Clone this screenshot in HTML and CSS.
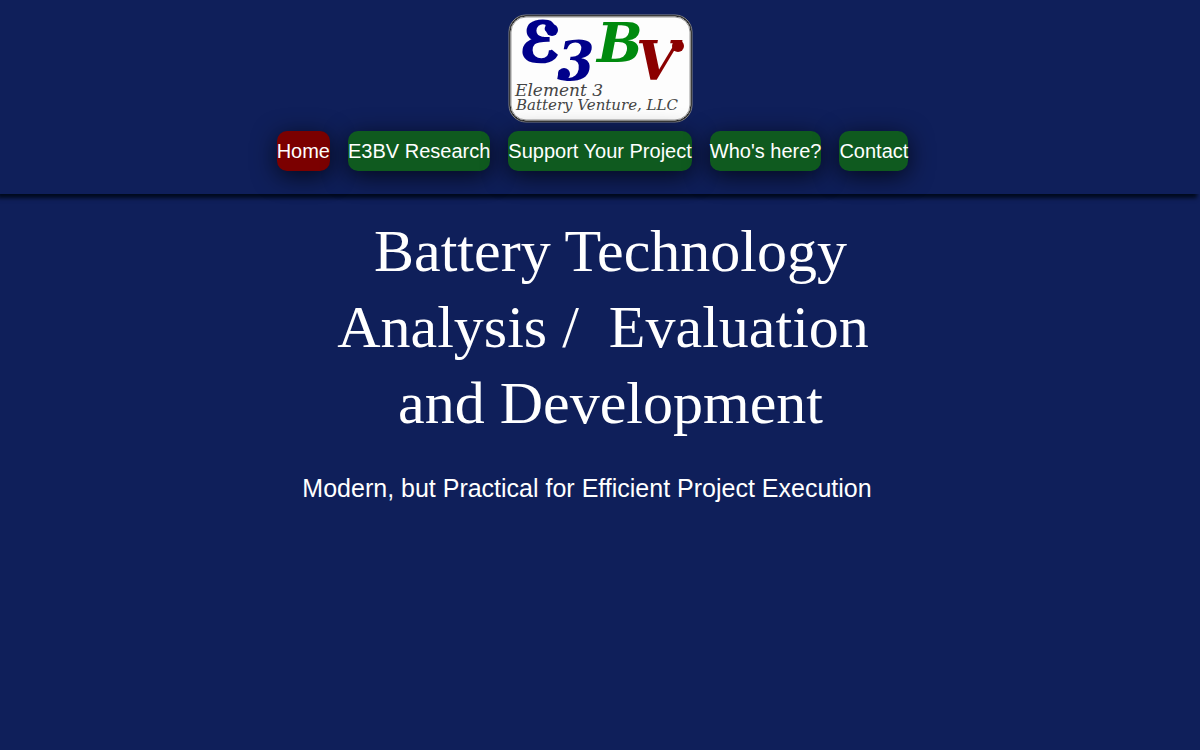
FILE: index.html
```html
<!DOCTYPE html>
<html lang="en">
<head>
    <meta charset="UTF-8">
    <meta name="viewport" content="width=device-width, initial-scale=1.0">
    <title>Element 3 Battery Venture, LLC</title>
    <link rel="stylesheet" href="styles.css">
</head>
<body>
    <header class="site-header">
        <svg class="logo" viewBox="0 0 186 110" role="img" aria-label="Element 3 Battery Venture, LLC">
            <rect class="frame-outer" x="2" y="2" width="183" height="107" rx="17"/>
            <rect class="frame-middle" x="3" y="3" width="181" height="105" rx="16"/>
            <rect class="frame-inner" x="4" y="4" width="179" height="103" rx="15"/>
            <!-- Monogram -->
            <g class="monogram">
                <text class="blue script" x="13" y="48">ℰ</text>
                <circle class="blue" cx="45" cy="17" r="6"/>
                <text class="blue" x="50" y="67">3</text>
                <circle class="blue" cx="57" cy="61" r="6"/>
                <text class="green" x="90" y="49">B</text>
                <text class="red" x="129" y="67">V</text>
                <circle class="red" cx="171" cy="33" r="6"/>
            </g>
            <g class="company">
                <text x="8" y="83">Element 3</text>
                <text class="small" x="9" y="97">Battery Venture, LLC</text>
            </g>
        </svg>
        <nav class="main-nav">
            <a class="nav-link active" href="#home">Home</a>
            <a class="nav-link" href="#research">E3BV Research</a>
            <a class="nav-link" href="#support">Support Your Project</a>
            <a class="nav-link" href="#who">Who's here?</a>
            <a class="nav-link" href="#contact">Contact</a>
        </nav>
    </header>
    <main class="intro">
        <h1 class="intro-title">&nbsp;Battery Technology<br>Analysis /&nbsp; Evaluation<br>&nbsp;and Development</h1>
        <p class="intro-text">Modern, but Practical for Efficient Project Execution</p>
    </main>
</body>
</html>
```
FILE: styles.css
```css
/* General styles */
body {
    margin: 0;
    background-color: #0f1f5a;
    color: #fff;
    font-family: "Liberation Sans", Arial, sans-serif;
}

/* Header */
.site-header {
    display: flex;
    flex-direction: column;
    align-items: center;
    gap: 8px;
    padding: 13px 0 23px;
    background-color: #0f1f5a;
    box-shadow: -3px 4px 4px #000a1e;
}

.logo {
    width: 186px;
    height: 110px;
}

.frame-outer {
    fill: #222;
    stroke: #888;
    stroke-width: 1;
}

.frame-middle {
    fill: #eee;
    stroke: #222;
    stroke-width: 1;
}

.frame-inner {
    fill: #fdfdfd;
    stroke: #999;
    stroke-width: 1;
}

.monogram {
    font-family: "DejaVu Serif", serif;
    font-size: 54px;
    font-weight: bold;
    font-style: italic;
}

.script {
    font-family: "DejaVu Sans", sans-serif;
    stroke: #00008b;
    stroke-width: 3;
}

.blue {
    fill: #00008b;
}

.green {
    fill: #008a0e;
}

.red {
    fill: #8b0000;
}

.company {
    font-family: "DejaVu Serif", serif;
    font-size: 17px;
    font-style: italic;
    fill: #444;
}

.company .small {
    font-size: 15px;
}

/* Navigation */
.main-nav {
    display: flex;
    flex-wrap: wrap;
    gap: 18px;
    padding-right: 15px;
}

.nav-link {
    border-radius: 10px;
    background-color: #0f5a1f;
    box-shadow: 0 5px 24px rgba(0, 0, 0, 0.7);
    color: #fff;
    font-size: 20px;
    line-height: 40px;
    text-decoration: none;
}

.nav-link.active {
    background-color: #7b0000;
}

/* Intro */
.intro {
    padding: 19px 0;
    text-align: center;
}

.intro-title {
    margin: 0;
    padding-left: 6px;
    font-family: "Liberation Serif", "Times New Roman", serif;
    font-size: 60px;
    font-weight: normal;
    line-height: 76px;
}

.intro-text {
    margin: 32px 0;
    padding-right: 26px;
    font-size: 25px;
    line-height: 30px;
}
```
